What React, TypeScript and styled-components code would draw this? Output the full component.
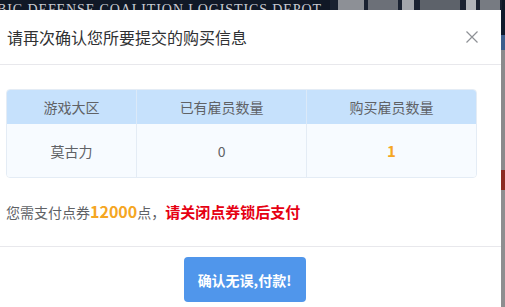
import styled, { createGlobalStyle } from "styled-components";

const Global = createGlobalStyle`
  html, body { margin: 0; padding: 0; }
  body {
    background: #0f1623;
    font-family: "Noto Sans CJK SC", "Noto Sans", sans-serif;
    overflow: hidden;
  }
`;

const Page = styled.div`
  width: 505px;
  height: 307px;
  overflow: hidden;
  display: flex;
  flex-direction: column;
`;

const Banner = styled.div`
  height: 10px;
  overflow: hidden;
  display: flex;
  align-items: flex-start;
  background: #101826;
`;

const BannerTitle = styled.div`
  font-family: "Liberation Serif", serif;
  font-size: 14px;
  letter-spacing: 0.9px;
  color: #c9ccd3;
  white-space: nowrap;
  line-height: 1;
  margin-top: 3px;
  margin-left: -3px;
  width: 333px;
`;

const Stage = styled.div`
  flex: 1;
  display: flex;
  min-height: 0;
`;

const Modal = styled.div`
  width: 501px;
  background: #fff;
  display: flex;
  flex-direction: column;
`;

const SideStrip = styled.div`
  flex: 1;
  background: linear-gradient(
    #0f1a2c 0px,
    #0f1a2c 25px,
    #3d5d8c 25px,
    #3d5d8c 40px,
    #8a8a8c 40px,
    #8a8a8c 160px,
    #8c2a22 160px,
    #8c2a22 180px,
    #8e8e90 180px
  );
`;

const Header = styled.div`
  height: 54px;
  border-bottom: 1px solid #e8e8ec;
  display: flex;
  align-items: center;
  justify-content: space-between;
  padding: 0 22px 0 7px;
`;

const Title = styled.h3`
  margin: 0;
  font-size: 16px;
  font-weight: 400;
  color: #303133;
`;

const Close = styled.button`
  border: 0;
  background: none;
  padding: 0;
  width: 14px;
  height: 14px;
  display: flex;
  cursor: pointer;
`;

const Body = styled.div`
  padding: 24px 25px 0 6px;
`;

const Table = styled.table`
  width: 471px;
  border-collapse: separate;
  border-spacing: 0;
  border: 1px solid #e4ecf5;
  border-radius: 4px;
  overflow: hidden;
  font-size: 14px;
  color: #606266;
  text-align: center;
`;

const Th = styled.th<{ w: number }>`
  width: ${(p) => p.w}px;
  height: 34px;
  padding: 0;
  font-weight: 400;
  background: #c6e1fc;
  border-right: 1px solid #dbe9f8;
  &:last-child { border-right: 0; }
`;

const Td = styled.td<{ accent?: boolean }>`
  height: 53px;
  padding: 0;
  background: #f7fbff;
  border-right: 1px solid #e4ecf5;
  color: ${(p) => (p.accent ? "#f5a623" : "#606266")};
  font-weight: ${(p) => (p.accent ? 700 : 400)};
  font-size: ${(p) => (p.accent ? "15px" : "14px")};
  &:last-child { border-right: 0; }
`;

const Notice = styled.p`
  margin: 23px 0 0;
  font-size: 14px;
  line-height: 20px;
  color: #606266;
  height: 45px;
`;

const Amount = styled.span`
  color: #f5a623;
  font-weight: 700;
  font-size: 16px;
`;

const Warning = styled.span`
  color: #e60012;
  font-weight: 700;
  font-size: 15px;
`;

const Footer = styled.div`
  border-top: 1px solid #e8e8ec;
  padding: 10px 12px 0 0;
  display: flex;
  justify-content: center;
`;

const PayButton = styled.button`
  width: 122px;
  height: 45px;
  border: 0;
  border-radius: 4px;
  background: #5096eb;
  color: #fff;
  font-family: "Noto Sans CJK SC", sans-serif;
  font-size: 14px;
  font-weight: 700;
  cursor: pointer;
`;

export default function App() {
  return (
    <>
      <Global />
      <Page>
        <Banner>
          <BannerTitle>BIC DEFENSE COALITION LOGISTICS DEPOT</BannerTitle>
          <svg width="172" height="10" viewBox="0 0 172 10">
            <rect x="0" y="0" width="172" height="10" fill="#1a2231" />
            <rect x="8" y="0" width="26" height="10" fill="#8d9096" />
            <rect x="38" y="0" width="30" height="10" fill="#6c7078" />
            <rect x="72" y="0" width="12" height="10" fill="#a3a6ab" />
            <rect x="90" y="0" width="40" height="10" fill="#5d626a" />
            <rect x="136" y="0" width="10" height="10" fill="#b0b3b8" />
            <rect x="150" y="0" width="20" height="10" fill="#777b82" />
          </svg>
        </Banner>
        <Stage>
          <Modal>
            <Header>
              <Title>请再次确认您所要提交的购买信息</Title>
              <Close aria-label="关闭">
                <svg width="14" height="14" viewBox="0 0 14 14">
                  <path d="M1.5 1.5L12.5 12.5M12.5 1.5L1.5 12.5" stroke="#8e9196" strokeWidth="1.2" />
                </svg>
              </Close>
            </Header>
            <Body>
              <Table>
                <thead>
                  <tr>
                    <Th w={130}>游戏大区</Th>
                    <Th w={170}>已有雇员数量</Th>
                    <Th w={170}>购买雇员数量</Th>
                  </tr>
                </thead>
                <tbody>
                  <tr>
                    <Td>莫古力</Td>
                    <Td>0</Td>
                    <Td accent>1</Td>
                  </tr>
                </tbody>
              </Table>
              <Notice>
                您需支付点券<Amount>12000</Amount>点，<Warning>请关闭点券锁后支付</Warning>
              </Notice>
            </Body>
            <Footer>
              <PayButton>确认无误,付款!</PayButton>
            </Footer>
          </Modal>
          <SideStrip />
        </Stage>
      </Page>
    </>
  );
}
